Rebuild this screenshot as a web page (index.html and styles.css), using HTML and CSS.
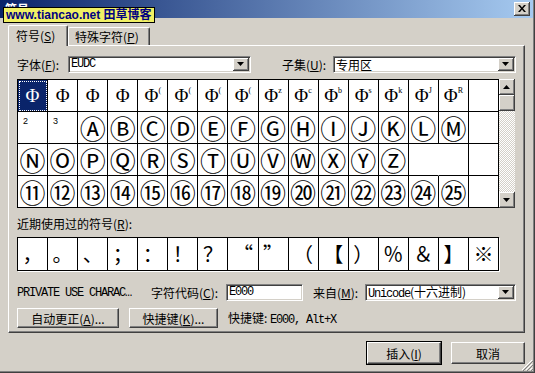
FILE: index.html
```html
<!DOCTYPE html>
<html lang="zh-CN">

<head>
  <meta charset="UTF-8" />
  <title>符号</title>
  <link rel="stylesheet" href="styles.css">
</head>

<body>
  <div class="window">
    <div class="titlebar">
      <span class="title">符号</span>
      <span class="close-btn">
        <svg width="8" height="7" viewBox="0 0 8 7"><path d="M0 0h2l2 2.5L6 0h2L5 3.5 8 7H6L4 4.5 2 7H0l3-3.5z" fill="#000"/></svg>
      </span>
    </div>
    <div class="watermark">www.tiancao.net 田草博客</div>

    <div class="main">
      <div class="tabs">
        <div class="tab tab-active">符号(<u>S</u>)</div>
        <div class="tab">特殊字符(<u>P</u>)</div>
      </div>

      <div class="panel">
        <div class="row font-row">
          <label class="lbl lbl-font">字体(<u>F</u>):</label>
          <div class="combo combo-font">
            <span class="combo-text mono">EUDC</span>
            <span class="combo-btn"><svg width="7" height="4"><polygon points="0,0 7,0 3.5,4" fill="#000"/></svg></span>
          </div>
          <label class="lbl lbl-subset">子集(<u>U</u>):</label>
          <div class="combo combo-subset">
            <span class="combo-text">专用区</span>
            <span class="combo-btn"><svg width="7" height="4"><polygon points="0,0 7,0 3.5,4" fill="#000"/></svg></span>
          </div>
        </div>

        <div class="charmap-wrap">
          <div class="charmap">
            <div class="cell cell-sel"><span class="phi">Φ</span></div>
            <div class="cell"><span class="phi">Φ</span></div>
            <div class="cell"><span class="phi">Φ</span></div>
            <div class="cell"><span class="phi">Φ</span></div>
            <div class="cell"><span class="phi">Φ</span><span class="sup">(</span></div>
            <div class="cell"><span class="phi">Φ</span><span class="sup">(</span></div>
            <div class="cell"><span class="phi">Φ</span><span class="sup">(</span></div>
            <div class="cell"><span class="phi">Φ</span><span class="sup">(</span></div>
            <div class="cell"><span class="phi">Φ</span><span class="sup">z</span></div>
            <div class="cell"><span class="phi">Φ</span><span class="sup">c</span></div>
            <div class="cell"><span class="phi">Φ</span><span class="sup">b</span></div>
            <div class="cell"><span class="phi">Φ</span><span class="sup">s</span></div>
            <div class="cell"><span class="phi">Φ</span><span class="sup">k</span></div>
            <div class="cell"><span class="phi">Φ</span><span class="sup">J</span></div>
            <div class="cell"><span class="phi">Φ</span><span class="sup">R</span></div>
            <div class="cell"></div>

            <div class="cell cell-tl">2</div>
            <div class="cell cell-tl">3</div>
            <div class="cell circ">Ⓐ</div>
            <div class="cell circ">Ⓑ</div>
            <div class="cell circ">Ⓒ</div>
            <div class="cell circ">Ⓓ</div>
            <div class="cell circ">Ⓔ</div>
            <div class="cell circ">Ⓕ</div>
            <div class="cell circ">Ⓖ</div>
            <div class="cell circ">Ⓗ</div>
            <div class="cell circ">Ⓘ</div>
            <div class="cell circ">Ⓙ</div>
            <div class="cell circ">Ⓚ</div>
            <div class="cell circ">Ⓛ</div>
            <div class="cell circ">Ⓜ</div>
            <div class="cell"></div>

            <div class="cell circ">Ⓝ</div>
            <div class="cell circ">Ⓞ</div>
            <div class="cell circ">Ⓟ</div>
            <div class="cell circ">Ⓠ</div>
            <div class="cell circ">Ⓡ</div>
            <div class="cell circ">Ⓢ</div>
            <div class="cell circ">Ⓣ</div>
            <div class="cell circ">Ⓤ</div>
            <div class="cell circ">Ⓥ</div>
            <div class="cell circ">Ⓦ</div>
            <div class="cell circ">Ⓧ</div>
            <div class="cell circ">Ⓨ</div>
            <div class="cell circ">Ⓩ</div>
            <div class="cell cell-open"></div>
            <div class="cell"></div>
            <div class="cell"></div>

            <div class="cell circ">⑪</div>
            <div class="cell circ">⑫</div>
            <div class="cell circ">⑬</div>
            <div class="cell circ">⑭</div>
            <div class="cell circ">⑮</div>
            <div class="cell circ">⑯</div>
            <div class="cell circ">⑰</div>
            <div class="cell circ">⑱</div>
            <div class="cell circ">⑲</div>
            <div class="cell circ">⑳</div>
            <div class="cell circ">㉑</div>
            <div class="cell circ">㉒</div>
            <div class="cell circ">㉓</div>
            <div class="cell circ">㉔</div>
            <div class="cell circ">㉕</div>
            <div class="cell"></div>
          </div>

          <div class="scrollbar">
            <span class="sb-btn"><svg width="7" height="4"><polygon points="3.5,0 7,4 0,4" fill="#000"/></svg></span>
            <span class="sb-thumb"></span>
            <span class="sb-track"></span>
            <span class="sb-btn"><svg width="7" height="4"><polygon points="0,0 7,0 3.5,4" fill="#000"/></svg></span>
          </div>
        </div>

        <div class="recent-label">近期使用过的符号(<u>R</u>):</div>
        <div class="recent">
          <div class="cell">，</div>
          <div class="cell">。</div>
          <div class="cell">、</div>
          <div class="cell">；</div>
          <div class="cell">：</div>
          <div class="cell">！</div>
          <div class="cell">？</div>
          <div class="cell">“</div>
          <div class="cell">”</div>
          <div class="cell">（</div>
          <div class="cell">【</div>
          <div class="cell">）</div>
          <div class="cell">％</div>
          <div class="cell">＆</div>
          <div class="cell">】</div>
          <div class="cell">※</div>
        </div>

        <div class="row info-row">
          <span class="char-name mono">PRIVATE USE CHARAC…</span>
          <label class="lbl lbl-code">字符代码(<u>C</u>):</label>
          <div class="textbox mono">E000</div>
          <label class="lbl lbl-from">来自(<u>M</u>):</label>
          <div class="combo combo-from">
            <span class="combo-text"><span class="mono">Unicode</span>(十六进制)</span>
            <span class="combo-btn"><svg width="7" height="4"><polygon points="0,0 7,0 3.5,4" fill="#000"/></svg></span>
          </div>
        </div>

        <div class="row btn-row">
          <span class="btn btn-auto">自动更正(<u>A</u>)...</span>
          <span class="btn btn-key">快捷键(<u>K</u>)...</span>
          <span class="shortcut">快捷键: <span class="mono">E000, Alt+X</span></span>
        </div>
      </div>

      <div class="footer">
        <span class="btn btn-default">插入(<u>I</u>)</span>
        <span class="btn btn-cancel">取消</span>
      </div>
    </div>

    <svg class="grip" width="12" height="12" viewBox="0 0 12 12">
      <path d="M11 1L1 11M11 5L5 11M11 9L9 11" stroke="#fff" stroke-width="1"/>
      <path d="M12 2L2 12M12 6L6 12M12 10L10 12" stroke="#808080" stroke-width="1"/>
    </svg>
  </div>
</body>

</html>
```

FILE: styles.css
```css
* {
  box-sizing: border-box;
}

body {
  margin: 0;
  background: #d4d0c8;
  font-family: "Noto Sans CJK SC", sans-serif;
  font-size: 12px;
  color: #000;
}

u {
  text-underline-offset: 1px;
}

.mono {
  font-family: "Liberation Mono", "Noto Sans CJK SC", monospace;
  letter-spacing: -1.2px;
}

/* Window frame */
.window {
  position: relative;
  width: 535px;
  height: 373px;
  padding: 0 2px 2px 0;
  background: #d4d0c8;
  box-shadow: inset -1px -1px #404040, inset -2px -2px #808080;
  display: flex;
  flex-direction: column;
}

.titlebar {
  height: 18px;
  padding: 0 3px 0 5px;
  background: linear-gradient(to right, #0a246a, #a6caf0);
  display: flex;
  align-items: center;
  justify-content: space-between;
}

.title {
  color: #fff;
  font-weight: bold;
  line-height: 14px;
}

.close-btn {
  width: 16px;
  height: 14px;
  background: #d4d0c8;
  border-right: 1px solid #404040;
  border-bottom: 1px solid #404040;
  box-shadow: inset 1px 1px #fff, inset -1px -1px #808080;
  display: flex;
  align-items: center;
  justify-content: center;
}

.watermark {
  position: absolute;
  left: 3px;
  top: 7px;
  width: 152px;
  height: 16px;
  padding-left: 2px;
  background: #f0f064;
  border: 1px solid #000;
  color: #000080;
  font-family: "Liberation Sans", "Noto Sans CJK SC", sans-serif;
  font-weight: bold;
  font-size: 12px;
  line-height: 14px;
  white-space: nowrap;
}

.main {
  flex: 1;
  padding: 7px 8px 0 8px;
  display: flex;
  flex-direction: column;
}

/* Tabs */
.tabs {
  height: 20px;
  display: flex;
  align-items: flex-end;
}

.tab {
  height: 18px;
  width: 82px;
  padding-left: 6px;
  border-top: 1px solid #fff;
  border-left: 1px solid #fff;
  border-right: 1px solid #404040;
  border-radius: 2px 2px 0 0;
  box-shadow: inset -1px 0 #808080;
  display: flex;
  align-items: center;
  line-height: 14px;
}

.tab-active {
  position: relative;
  z-index: 1;
  width: 60px;
  height: 21px;
  margin-bottom: -1px;
  padding-left: 7px;
  background: #d4d0c8;
}

.panel {
  width: 517px;
  height: 288px;
  padding: 10px 8px 0;
  border-top: 1px solid #fff;
  border-left: 1px solid #fff;
  border-right: 1px solid #404040;
  border-bottom: 1px solid #404040;
  box-shadow: inset -1px -1px #808080;
  display: flex;
  flex-direction: column;
}

.row {
  display: flex;
  align-items: center;
}

.lbl {
  white-space: nowrap;
}

/* Combo boxes and text box */
.font-row {
  height: 17px;
}

.lbl-font,
.lbl-subset {
  width: 51px;
}

.lbl-subset {
  margin-left: 31px;
}

.combo,
.textbox {
  height: 17px;
  background: #fff;
  border-top: 1px solid #808080;
  border-left: 1px solid #808080;
  border-right: 1px solid #fff;
  border-bottom: 1px solid #fff;
  box-shadow: inset 1px 1px #404040, inset -1px -1px #d4d0c8;
  display: flex;
  align-items: center;
  padding: 0 1px 0 2px;
  line-height: 13px;
  white-space: nowrap;
}

.combo-font,
.combo-subset {
  width: 183px;
}

.combo-text {
  flex: 1;
}

.combo-btn {
  width: 16px;
  height: 13px;
  background: #d4d0c8;
  border-right: 1px solid #404040;
  border-bottom: 1px solid #404040;
  box-shadow: inset 1px 1px #fff, inset -1px -1px #808080;
  display: flex;
  align-items: center;
  justify-content: center;
}

/* Character grid */
.charmap-wrap {
  margin-top: 6px;
  display: flex;
}

.charmap {
  width: 482px;
  height: 129px;
  background: #fff;
  border-top: 1px solid #000;
  border-left: 1px solid #000;
  display: grid;
  grid-template-columns: repeat(16, 1fr);
  grid-template-rows: repeat(4, 1fr);
}

.cell {
  border-right: 1px solid #000;
  border-bottom: 1px solid #000;
  display: flex;
  align-items: center;
  justify-content: center;
  overflow: hidden;
}

.cell-open {
  border-right-color: #fff;
}

.cell-sel {
  background: #0a246a;
  color: #fff;
  outline: 1px dotted #fff;
  outline-offset: -2px;
}

.phi {
  font-family: "Liberation Serif", serif;
  font-size: 19px;
  line-height: 1;
}

.sup {
  align-self: flex-start;
  margin-top: 7px;
  font-family: "Liberation Serif", serif;
  font-size: 8px;
  line-height: 1;
}

.circ {
  font-size: 26px;
  line-height: 1;
}

.cell-tl {
  align-items: flex-start;
  justify-content: flex-start;
  padding: 4px 0 0 5px;
  font-family: "Liberation Sans", sans-serif;
  font-size: 9px;
}

.scrollbar {
  width: 16px;
  height: 129px;
  display: flex;
  flex-direction: column;
}

.sb-btn,
.sb-thumb {
  height: 16px;
  background: #d4d0c8;
  border-right: 1px solid #404040;
  border-bottom: 1px solid #404040;
  box-shadow: inset 1px 1px #fff, inset -1px -1px #808080;
  display: flex;
  align-items: center;
  justify-content: center;
}

.sb-track {
  flex: 1;
  background-image: conic-gradient(#d4d0c8 25%, #fff 0 50%, #d4d0c8 0 75%, #fff 0);
  background-size: 2px 2px;
}

/* Recently used */
.recent-label {
  margin-top: 9px;
  line-height: 14px;
}

.recent {
  width: 482px;
  height: 34px;
  margin-top: 6px;
  background: #fff;
  border-top: 1px solid #000;
  border-left: 1px solid #000;
  box-shadow: 1px 1px 0 #fff;
  display: grid;
  grid-template-columns: repeat(16, 1fr);
  font-size: 20px;
  line-height: 1;
}

/* Info and buttons */
.info-row {
  height: 17px;
  margin-top: 13px;
}

.char-name {
  width: 134px;
  white-space: nowrap;
}

.lbl-code {
  width: 75px;
}

.textbox {
  width: 77px;
}

.lbl-from {
  width: 52px;
  margin-left: 10px;
}

.combo-from {
  width: 151px;
}

.btn-row {
  height: 20px;
  margin-top: 7px;
}

.btn {
  height: 20px;
  background: #d4d0c8;
  border-top: 1px solid #fff;
  border-left: 1px solid #fff;
  border-right: 1px solid #404040;
  border-bottom: 1px solid #404040;
  box-shadow: inset -1px -1px #808080;
  display: flex;
  align-items: center;
  justify-content: center;
  white-space: nowrap;
}

.btn-auto {
  width: 102px;
}

.btn-key {
  width: 89px;
  margin-left: 10px;
}

.shortcut {
  margin-left: 10px;
  white-space: nowrap;
}

.footer {
  margin-top: 9px;
  display: flex;
  justify-content: flex-end;
  gap: 10px;
}

.footer .btn {
  width: 74px;
  height: 22px;
}

.btn-default {
  outline: 1px solid #000;
  outline-offset: 0;
  border-top-color: #fff;
}

.grip {
  position: absolute;
  right: 2px;
  bottom: 2px;
}
```
